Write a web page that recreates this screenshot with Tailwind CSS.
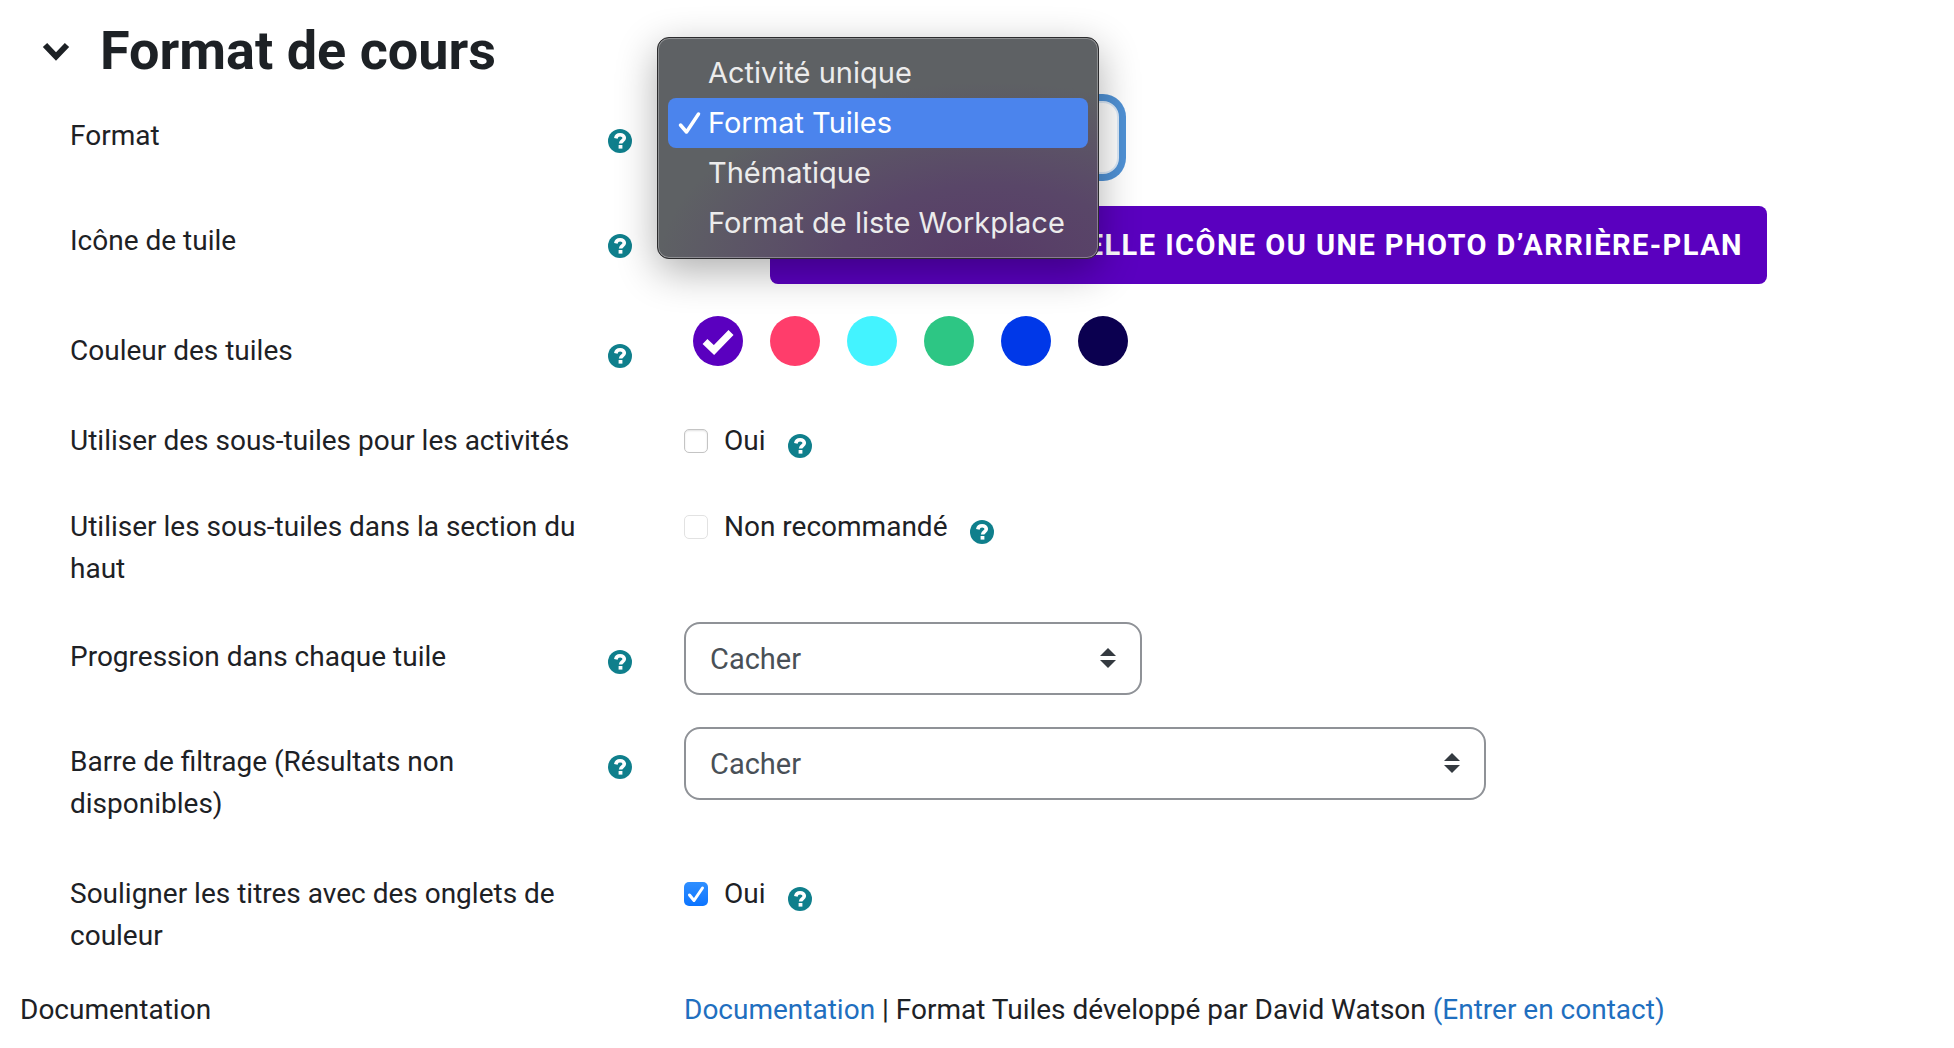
<!DOCTYPE html>
<html lang="fr">
<head>
  <meta charset="UTF-8">
  <meta name="viewport" content="width=device-width, initial-scale=1.0">
  <title>Format de cours</title>
  <script src="https://cdn.jsdelivr.net/npm/@tailwindcss/browser@4"></script>
</head>
<body class="bg-white text-[#1d2125] text-[28px] leading-[42px] font-['Roboto',sans-serif]">
  <!-- Shared icons -->
  <svg class="hidden">
    <symbol id="help" viewBox="0 0 24 24">
      <circle cx="12" cy="12" r="12" fill="#0f7f8c"/>
      <path d="M7.800 9.400C8.200 7 9.800 5.800 12.100 5.800c2.400 0 4.200 1.300 4.200 3.300 0 2.700-3.700 2.500-3.700 5.400" fill="none" stroke="#fff" stroke-width="3.600"/>
      <rect x="10.600" y="16" width="3.800" height="3.600" fill="#fff"/>
    </symbol>
    <symbol id="sort" viewBox="0 0 16 20">
      <path d="M8 0l8 8H0zM8 20l8-8H0z" fill="#343a40"/>
    </symbol>
  </svg>

  <main class="px-5 pt-[21px] pb-4">
    <!-- Section title -->
    <h1 class="flex items-center gap-[30px] pl-[22px] text-[54px] leading-[60px] font-bold">
      <button type="button" aria-label="Replier" aria-expanded="true">
        <svg class="w-7 h-5" viewBox="0 0 28 20"><path d="M3 4l11 11.500L25 4" fill="none" stroke="#1d2125" stroke-width="6"/></svg>
      </button>
      Format de cours
    </h1>

    <form class="pt-5">
      <!-- Format -->
      <div class="relative grid grid-cols-[562px_1fr] gap-x-[52px] pl-[50px] mb-8">
        <div class="flex items-start justify-between gap-6 pt-[14px]">
          <label for="format">Format</label>
          <button type="button" aria-label="Aide" class="shrink-0 mt-[14px]"><svg class="size-6"><use href="#help"/></svg></button>
        </div>
        <div>
          <select id="format" class="appearance-none w-[435px] h-[73px] px-6 rounded-2xl border-2 border-[#dbe9f8] bg-white text-[#495057] ring-7 ring-[#5092d6]">
            <option>Activité unique</option>
            <option selected>Format Tuiles</option>
            <option>Thématique</option>
            <option>Format de liste Workplace</option>
          </select>
        </div>

        <!-- Open menu -->
        <ul role="listbox" aria-label="Format" class="absolute z-10 left-[637px] -top-[64px] w-[442px] p-[10px] rounded-xl border border-[#2c2c2e] inset-ring inset-ring-white/30 shadow-[0_12px_40px_rgba(0,0,0,0.32)] bg-[#5e6164] bg-[radial-gradient(75%_85%_at_75%_105%,#573a67_0%,#594668_45%,#5e6164_100%)] text-[#ececec] text-[29px] leading-[50px] font-['Inter',sans-serif]">
          <li role="option" aria-selected="false" class="pl-10">Activité unique</li>
          <li role="option" aria-selected="true" class="flex items-center pl-[10px] gap-[7px] rounded-lg bg-[#4b84ed] text-white">
            <svg class="w-[23px] h-6" viewBox="0 0 23 24"><path d="M2.500 14l6 7L20.500 3" fill="none" stroke="#fff" stroke-width="3.500" stroke-linecap="round" stroke-linejoin="round"/></svg>
            Format Tuiles
          </li>
          <li role="option" aria-selected="false" class="pl-10">Thématique</li>
          <li role="option" aria-selected="false" class="pl-10">Format de liste Workplace</li>
        </ul>
      </div>

      <!-- Icône de tuile -->
      <div class="grid grid-cols-[562px_1fr] gap-x-[52px] pl-[50px] mb-8">
        <div class="flex items-start justify-between gap-6 pt-[14px]">
          <span>Icône de tuile</span>
          <button type="button" aria-label="Aide" class="shrink-0 mt-[14px]"><svg class="size-6"><use href="#help"/></svg></button>
        </div>
        <div class="pl-[86px]">
          <button type="button" class="w-[997px] h-[78px] px-6 rounded-lg bg-[#5a00bf] text-white text-[29px] text-right whitespace-nowrap font-bold tracking-wider">CHOISIR UNE NOUVELLE ICÔNE OU UNE PHOTO D’ARRIÈRE-PLAN</button>
        </div>
      </div>

      <!-- Couleur des tuiles -->
      <div class="grid grid-cols-[562px_1fr] gap-x-[52px] pl-[50px] mb-8">
        <div class="flex items-start justify-between gap-6 pt-[14px]">
          <span>Couleur des tuiles</span>
          <button type="button" aria-label="Aide" class="shrink-0 mt-[14px]"><svg class="size-6"><use href="#help"/></svg></button>
        </div>
        <div class="flex gap-[27px] pl-[9px] h-[58px]">
          <button type="button" aria-label="Violet" class="flex items-center justify-center size-[50px] rounded-full bg-[#5a00bf]">
            <svg class="w-[34px] h-7" viewBox="0 0 34 28"><path d="M4 14.500L13 23 30 5.500" fill="none" stroke="#fff" stroke-width="7" stroke-linejoin="miter"/></svg>
          </button>
          <button type="button" aria-label="Rose" class="size-[50px] rounded-full bg-[#ff3d6b]"></button>
          <button type="button" aria-label="Cyan" class="size-[50px] rounded-full bg-[#43f3ff]"></button>
          <button type="button" aria-label="Vert" class="size-[50px] rounded-full bg-[#2dc684]"></button>
          <button type="button" aria-label="Bleu" class="size-[50px] rounded-full bg-[#0038e8]"></button>
          <button type="button" aria-label="Bleu nuit" class="size-[50px] rounded-full bg-[#0b0050]"></button>
        </div>
      </div>

      <!-- Sous-tuiles : activités -->
      <div class="grid grid-cols-[562px_1fr] gap-x-[52px] pl-[50px] pt-[14px] mb-[30px]">
        <span>Utiliser des sous-tuiles pour les activités</span>
        <div class="flex items-start">
          <input type="checkbox" id="subtiles" class="appearance-none size-6 mt-[9px] rounded-[5px] border border-[#c4c4c4] bg-white shadow-[inset_0_1px_2px_rgba(0,0,0,0.12)]">
          <label for="subtiles" class="pl-4 pr-[22px]">Oui</label>
          <button type="button" aria-label="Aide" class="mt-[14px]"><svg class="size-6"><use href="#help"/></svg></button>
        </div>
      </div>

      <!-- Sous-tuiles : section du haut -->
      <div class="grid grid-cols-[562px_1fr] gap-x-[52px] pl-[50px] pt-[14px] mb-8">
        <span class="pr-12">Utiliser les sous-tuiles dans la section du haut</span>
        <div class="flex items-start">
          <input type="checkbox" id="subtilestop" disabled class="appearance-none size-6 mt-[9px] rounded-[5px] border border-[#e2e2e2] bg-white">
          <label for="subtilestop" class="pl-4 pr-[22px]">Non recommandé</label>
          <button type="button" aria-label="Aide" class="mt-[14px]"><svg class="size-6"><use href="#help"/></svg></button>
        </div>
      </div>

      <!-- Progression -->
      <div class="grid grid-cols-[562px_1fr] gap-x-[52px] pl-[50px] mb-8">
        <div class="flex items-start justify-between gap-6 pt-[14px]">
          <label for="progress">Progression dans chaque tuile</label>
          <button type="button" aria-label="Aide" class="shrink-0 mt-[14px]"><svg class="size-6"><use href="#help"/></svg></button>
        </div>
        <div class="relative w-[458px] h-[73px]">
          <select id="progress" class="appearance-none w-full h-full px-6 rounded-2xl border-2 border-[#8f9297] bg-white text-[#495057] text-[29px]">
            <option>Cacher</option>
          </select>
          <svg class="absolute right-[26px] top-[26px] w-4 h-5 pointer-events-none"><use href="#sort"/></svg>
        </div>
      </div>

      <!-- Barre de filtrage -->
      <div class="grid grid-cols-[562px_1fr] gap-x-[52px] pl-[50px] mb-[34px]">
        <div class="flex items-start justify-between gap-6 pt-[14px]">
          <label for="filterbar">Barre de filtrage (Résultats non disponibles)</label>
          <button type="button" aria-label="Aide" class="shrink-0 mt-[14px]"><svg class="size-6"><use href="#help"/></svg></button>
        </div>
        <div class="relative w-[802px] h-[73px]">
          <select id="filterbar" class="appearance-none w-full h-full px-6 rounded-2xl border-2 border-[#8f9297] bg-white text-[#495057] text-[29px]">
            <option>Cacher</option>
          </select>
          <svg class="absolute right-[26px] top-[26px] w-4 h-5 pointer-events-none"><use href="#sort"/></svg>
        </div>
      </div>

      <!-- Onglets de couleur -->
      <div class="grid grid-cols-[562px_1fr] gap-x-[52px] pl-[50px] pt-[14px] mb-8">
        <span class="pr-12">Souligner les titres avec des onglets de couleur</span>
        <div class="flex items-start">
          <div class="relative size-6 mt-[9px]">
            <input type="checkbox" id="headings" checked class="block appearance-none size-6 rounded-[5px] bg-linear-to-b from-[#2f8fff] to-[#0a74ff]">
            <svg class="absolute inset-0 size-6 pointer-events-none" viewBox="0 0 24 24"><path d="M5.500 13l4.500 5.500L18.500 6" fill="none" stroke="#fff" stroke-width="3" stroke-linecap="round" stroke-linejoin="round"/></svg>
          </div>
          <label for="headings" class="pl-4 pr-[22px]">Oui</label>
          <button type="button" aria-label="Aide" class="mt-[14px]"><svg class="size-6"><use href="#help"/></svg></button>
        </div>
      </div>

      <!-- Documentation -->
      <div class="grid grid-cols-[612px_1fr] gap-x-[52px]">
        <span>Documentation</span>
        <p><a href="#" class="text-[#1f6fbf]">Documentation</a> | Format Tuiles développé par David Watson <a href="#" class="text-[#1f6fbf]">(Entrer en contact)</a></p>
      </div>
    </form>
  </main>
</body>
</html>
